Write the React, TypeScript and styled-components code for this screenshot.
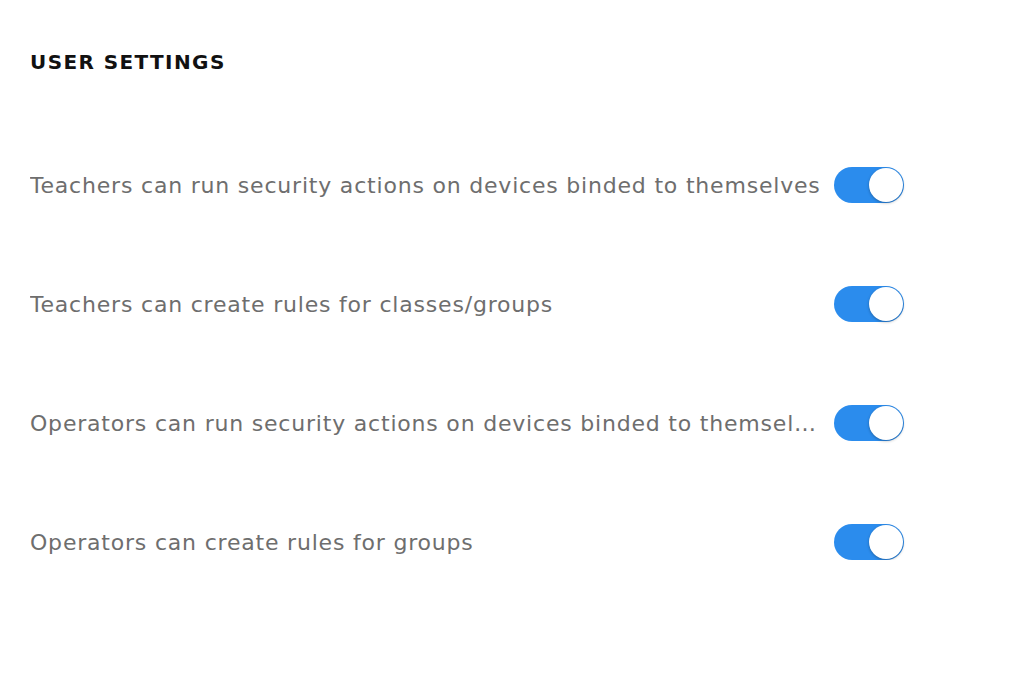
import React from "react";
import styled, { createGlobalStyle } from "styled-components";

const Global = createGlobalStyle`
  html, body { margin: 0; padding: 0; background: #ffffff; }
  body { font-family: "DejaVu Sans", "Open Sans", sans-serif; }
`;

const Page = styled.div`
  padding: 48px 0 0 30px;
  width: 1024px;
  box-sizing: border-box;
`;

const Title = styled.h2`
  margin: 0;
  font-family: "DejaVu Sans", sans-serif;
  font-weight: 700;
  font-size: 20px;
  line-height: 28px;
  letter-spacing: 1.4px;
  color: #111;
`;

const List = styled.div`
  display: flex;
  flex-direction: column;
  gap: 83px;
  margin-top: 91px;
`;

const Row = styled.div`
  display: flex;
  align-items: center;
  gap: 8px;
  height: 36px;
`;

const Label = styled.span`
  width: 796px;
  font-size: 22px;
  letter-spacing: 0.8px;
  color: #6e6e6e;
  white-space: nowrap;
  overflow: hidden;
  text-overflow: ellipsis;
`;

const Track = styled.div<{ $on: boolean }>`
  position: relative;
  width: 70px;
  height: 36px;
  border-radius: 18px;
  background: ${(p) => (p.$on ? "#2b8ced" : "#d0d0d0")};
  flex-shrink: 0;
`;

const Knob = styled.div<{ $on: boolean }>`
  position: absolute;
  top: 1px;
  left: ${(p) => (p.$on ? "35px" : "1px")};
  width: 34px;
  height: 34px;
  border-radius: 50%;
  background: #ffffff;
  box-shadow: 0 1px 3px rgba(0, 0, 0, 0.3);
`;

const Toggle = ({ on }: { on: boolean }) => (
  <Track $on={on}>
    <Knob $on={on} />
  </Track>
);

const settings = [
  "Teachers can run security actions on devices binded to themselves",
  "Teachers can create rules for classes/groups",
  "Operators can run security actions on devices binded to themselves",
  "Operators can create rules for groups",
];

export default function App() {
  return (
    <Page>
      <Global />
      <Title>USER SETTINGS</Title>
      <List>
        {settings.map((s) => (
          <Row key={s}>
            <Label>{s}</Label>
            <Toggle on />
          </Row>
        ))}
      </List>
    </Page>
  );
}
